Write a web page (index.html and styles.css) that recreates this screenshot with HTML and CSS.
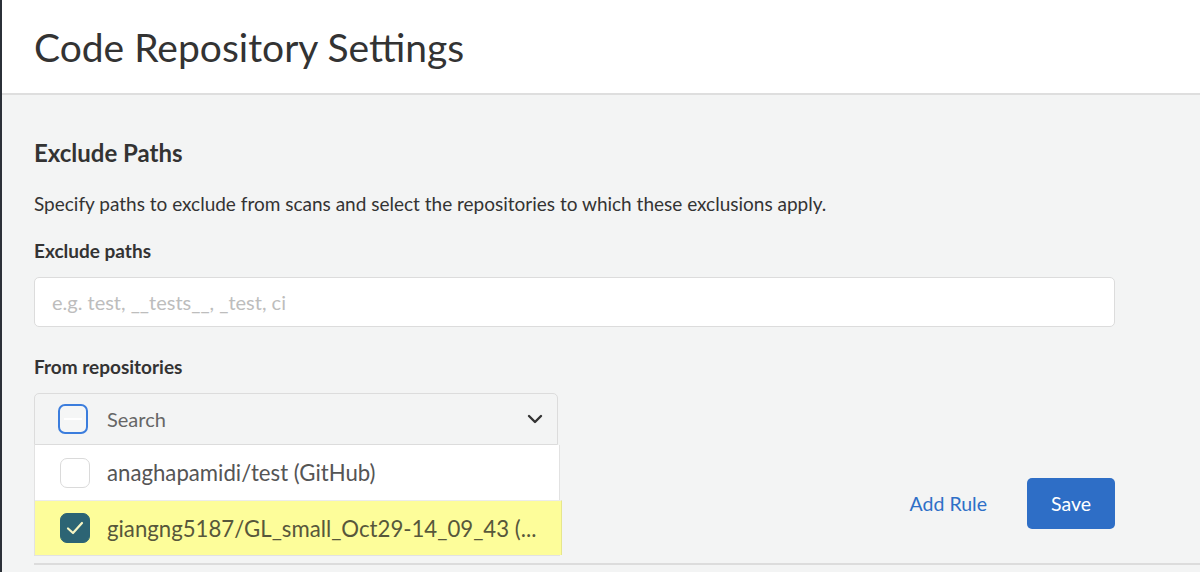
FILE: index.html
```html
<!DOCTYPE html>
<html lang="en">
<head>
<meta charset="utf-8">
<title>Code Repository Settings</title>
<link rel="stylesheet" href="styles.css">
</head>
<body>
<div class="page">
  <header class="page-header">
    <h1 class="page-title">Code Repository Settings</h1>
  </header>
  <main class="content">
    <section class="section">
      <div class="form">
        <h2 class="section-title">Exclude Paths</h2>
        <p class="section-desc">Specify paths to exclude from scans and select the repositories to which these exclusions apply.</p>
        <label class="field-label">Exclude paths</label>
        <div class="text-input"><span class="placeholder">e.g. test, __tests__, _test, ci</span></div>
        <label class="field-label field-label-repos">From repositories</label>
        <div class="dropdown">
          <div class="dropdown-head">
            <span class="cb cb-focus"><span class="cb-dash"></span></span>
            <span class="dropdown-search">Search</span>
            <svg class="chevron" width="16" height="10" viewBox="0 0 16 10"><path d="M2 2 L8 8 L14 2" fill="none" stroke="#333" stroke-width="2.4" stroke-linecap="round" stroke-linejoin="round"/></svg>
          </div>
          <ul class="dropdown-menu">
            <li class="option">
              <span class="cb"></span>
              <span class="option-text">anaghapamidi/test (GitHub)</span>
            </li>
            <li class="option option-selected">
              <span class="cb cb-checked"><svg width="20" height="16" viewBox="0 0 20 16"><path d="M3 8.5 L8 13 L17 3" fill="none" stroke="#f7f6c4" stroke-width="2.2" stroke-linecap="round" stroke-linejoin="round"/></svg></span>
              <span class="option-text">giangng5187/GL_small_Oct29-14_09_43 (...</span>
            </li>
          </ul>
        </div>
        <div class="actions">
          <a class="link-btn" href="#">Add Rule</a>
          <button class="btn-primary" type="button">Save</button>
        </div>
      </div>
    </section>
  </main>
</div>
</body>
</html>
```

FILE: styles.css
```css
* { box-sizing: border-box; }
html, body { margin: 0; padding: 0; }
body {
  font-family: Lato, "Open Sans", Arial, sans-serif;
  color: #333;
  background: #f3f4f4;
  width: 1200px;
  height: 572px;
  overflow: hidden;
}
.page {
  border-left: 2px solid #2b3038;
  min-height: 572px;
  background: #f3f4f4;
}
.page-header {
  height: 95px;
  background: #fff;
  border-bottom: 2px solid #dedede;
  display: flex;
  align-items: center;
  padding-left: 32px;
}
.page-title {
  margin: 0;
  font-size: 39px;
  font-weight: 400;
  color: #333;
  line-height: 46px;
}
.content {
  padding-left: 32px;
}
.section {
  border-bottom: 2px solid #dcdcdc;
  padding-top: 43px;
  padding-bottom: 34px;
}
.form {
  width: 1081px;
  display: flex;
  flex-direction: column;
}
.section-title {
  margin: 0;
  font-size: 24px;
  font-weight: 700;
  line-height: 30px;
  color: #333;
}
.section-desc {
  margin: 24px 0 0;
  font-size: 19px;
  line-height: 24px;
  color: #333;
}
.field-label {
  display: block;
  margin-top: 23px;
  font-size: 19px;
  font-weight: 700;
  line-height: 24px;
  color: #333;
}
.text-input {
  margin-top: 14px;
  height: 50px;
  width: 100%;
  border: 1px solid #dcdcdc;
  border-radius: 5px;
  background: #fff;
  padding-left: 17px;
  display: flex;
  align-items: center;
}
.placeholder {
  font-size: 20px;
  color: #bdbdbd;
}
.field-label-repos { margin-top: 28px; }
.dropdown {
  position: relative;
  margin-top: 14px;
  width: 524px;
}
.dropdown-head {
  height: 52px;
  border: 1px solid #dcdcdc;
  border-radius: 5px 5px 0 0;
  background: #f3f4f4;
  display: flex;
  align-items: center;
  padding: 0 14px 0 23px;
}
.cb {
  width: 30px;
  height: 30px;
  border: 1.5px solid #dadada;
  border-radius: 7px;
  background: #fff;
  flex: none;
  display: flex;
  align-items: center;
  justify-content: center;
}
.cb-focus {
  border: 2px solid #3b7ddd;
  background: #f5f6f6;
}
.cb-dash {
  width: 18px;
  height: 2px;
  background: #fff;
}
.cb-checked {
  background: #2c6474;
  border-color: #2c6474;
}
.dropdown-search {
  margin-left: 19px;
  font-size: 20px;
  color: #666;
  flex: 1;
}
.chevron { display: block; }
.dropdown-menu {
  position: absolute;
  top: 52px;
  left: 0;
  width: 526px;
  margin: 0;
  padding: 0;
  list-style: none;
  background: #fff;
  border: 1px solid #e2e2e2;
  border-top: 0;
}
.option {
  height: 55px;
  display: flex;
  align-items: center;
  padding-left: 25px;
}
.option + .option { border-top: 1px solid #ececec; }
.option-text {
  margin-left: 17px;
  font-size: 22.2px;
  color: #555;
}
.option-selected {
  background: #fdfd9a;
  margin-right: -3px;
  border-right: 1px solid #e6e68c;
}
.option-selected .option-text { color: #57573b; }
.actions {
  margin-top: 33px;
  display: flex;
  justify-content: flex-end;
  align-items: center;
  gap: 40px;
}
.link-btn {
  font-size: 19.5px;
  color: #2e6fc7;
  text-decoration: none;
}
.btn-primary {
  width: 88px;
  height: 51px;
  border: 0;
  border-radius: 5px;
  background: #2e6ec6;
  color: #fff;
  font-family: inherit;
  font-size: 19.5px;
}
```
